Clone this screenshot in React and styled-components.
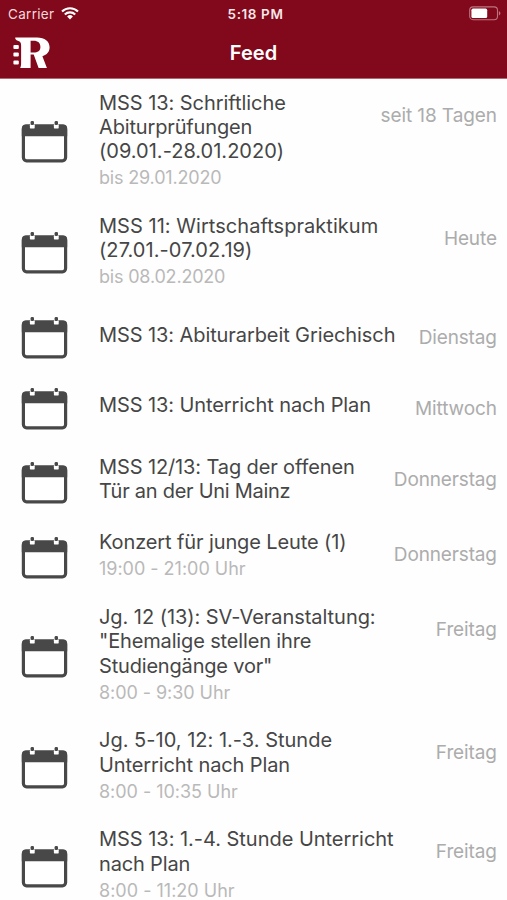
import React from "react";
import styled, { createGlobalStyle } from "styled-components";

const GlobalStyle = createGlobalStyle`
  * { box-sizing: border-box; }
  html, body { margin: 0; padding: 0; background: #fff; }
  body { font-family: Inter, "Liberation Sans", sans-serif; overflow: hidden; }
`;

const Screen = styled.div`
  width: 507px;
  height: 900px;
  overflow: hidden;
  background: #fefefe;
`;

const Header = styled.header`
  height: 79px;
  background: #82081b;
  border-bottom: 1px solid #b0676f;
  color: #fff;
`;

const StatusBar = styled.div`
  display: grid;
  grid-template-columns: 1fr auto 1fr;
  align-items: center;
  height: 27px;
  padding: 0 6px 0 8px;
`;

const Network = styled.div`
  display: flex;
  align-items: center;
  gap: 7px;
  font-size: 13.5px;
  letter-spacing: 0.3px;
  color: #f3d9dc;
`;

const Clock = styled.div`
  padding-left: 2px;
  font-size: 13.5px;
  font-weight: 600;
  letter-spacing: 0.6px;
  color: #f8e6e8;
`;

const BatteryIcon = styled.svg`
  justify-self: end;
  display: block;
`;

const NavBar = styled.div`
  display: grid;
  grid-template-columns: 1fr auto 1fr;
  align-items: center;
  height: 51px;
  padding: 0 0 0 13px;
`;

const Logo = styled.svg`
  display: block;
`;

const Title = styled.h1`
  margin: 0;
  padding-right: 13px;
  font-size: 20px;
  line-height: 24px;
  font-weight: 600;
  letter-spacing: 0.1px;
`;

const Feed = styled.main`
  display: flex;
  flex-direction: column;
  padding-top: 1.6px;
`;

const Row = styled.article`
  display: grid;
  grid-template-columns: 99px 1fr auto;
  min-height: 70.9px;
  flex: none;
  padding-right: 10px;
`;

const CalendarIcon = styled.svg`
  display: block;
  align-self: center;
  margin-left: 21px;
`;

const Body = styled.div`
  display: flex;
  flex-direction: column;
  justify-content: center;
  padding: 10px 0 ${(p) => (p.$hasSub ? 14 : 17)}px;
  white-space: nowrap;
`;

const Line = styled.div`
  font-size: 20px;
  line-height: 24.4px;
  letter-spacing: ${(p) => p.$spacing}px;
  color: #464646;
`;

const Sub = styled.div`
  margin-top: 3.6px;
  font-size: 18px;
  line-height: 22.5px;
  letter-spacing: ${(p) => p.$spacing}px;
  color: #b9b9b9;
`;

const When = styled.div`
  padding-top: 23px;
  font-size: 19px;
  line-height: 24px;
  letter-spacing: ${(p) => p.$spacing}px;
  margin-right: ${(p) => -p.$spacing}px;
  color: #acacac;
  white-space: nowrap;
`;

const entries = [
  {
    lines: [["MSS 13: Schriftliche", -0.05], ["Abiturprüfungen", -0.15], ["(09.01.-28.01.2020)", 0.01]],
    sub: ["bis 29.01.2020", -0.17],
    when: ["seit 18 Tagen", -0.09],
  },
  {
    lines: [["MSS 11: Wirtschaftspraktikum", 0.04], ["(27.01.-07.02.19)", 0.07]],
    sub: ["bis 08.02.2020", -0.19],
    when: ["Heute", -0.11],
  },
  { lines: [["MSS 13: Abiturarbeit Griechisch", -0.09]], when: ["Dienstag", -0.13] },
  { lines: [["MSS 13: Unterricht nach Plan", -0.09]], when: ["Mittwoch", -0.1] },
  {
    lines: [["MSS 12/13: Tag der offenen", -0.12], ["Tür an der Uni Mainz", -0.27]],
    when: ["Donnerstag", -0.14],
  },
  {
    lines: [["Konzert für junge Leute (1)", -0.11]],
    sub: ["19:00 - 21:00 Uhr", -0.02],
    when: ["Donnerstag", -0.14],
  },
  {
    lines: [["Jg. 12 (13): SV-Veranstaltung:", -0.05], ['"Ehemalige stellen ihre', -0.15], ['Studiengänge vor"', -0.18]],
    sub: ["8:00 - 9:30 Uhr", -0.06],
    when: ["Freitag", -0.11],
  },
  {
    lines: [["Jg. 5-10, 12: 1.-3. Stunde", 0.01], ["Unterricht nach Plan", -0.11]],
    sub: ["8:00 - 10:35 Uhr", -0.03],
    when: ["Freitag", -0.11],
  },
  {
    lines: [["MSS 13: 1.-4. Stunde Unterricht", -0.03], ["nach Plan", -0.16]],
    sub: ["8:00 - 11:20 Uhr", 0.01],
    when: ["Freitag", -0.11],
  },
];

function Wifi() {
  return (
    <svg width="18" height="13" viewBox="0 0 18 13" fill="none" stroke="#fff" strokeWidth="2.1">
      <path d="M1 4.6A11.4 11.4 0 0 1 17 4.6" />
      <path d="M3.8 7.5A7.4 7.4 0 0 1 14.2 7.5" />
      <path d="M9 12.4L6.1 9.5A4.1 4.1 0 0 1 11.9 9.5Z" fill="#fff" stroke="none" />
    </svg>
  );
}

function Battery() {
  return (
    <BatteryIcon width="32" height="15" viewBox="0 0 32 15">
      <rect x="0.7" y="0.9" width="27.8" height="12.8" rx="3.4" fill="none" stroke="#bd7480" strokeWidth="1.1" />
      <rect x="2.4" y="2.6" width="15.8" height="9.4" rx="1.6" fill="#fff" />
      <path d="M29.9 5.2C31.9 5.9 31.9 8.7 29.9 9.4Z" fill="#bd7480" />
    </BatteryIcon>
  );
}

function BrandMark() {
  return (
    <Logo width="38" height="34" viewBox="0 0 38 34" fill="#fff">
      <rect x="0.4" y="8.9" width="5.4" height="4" rx="1" />
      <rect x="0.4" y="16.6" width="5.4" height="4" rx="1" />
      <rect x="0.4" y="24.4" width="5.4" height="4" rx="1" />
      <path
        fillRule="evenodd"
        d="M2.2 1.5H24C31.8 1.5 36.6 5.4 36.6 11.3C36.6 15.8 34 18.8 29.4 20.2L33.9 31.9H25.6L20.7 18.4H17.6V31.9H7.2C7.8 30.5 8.1 29.2 8.1 27.2V9C8.1 6 6.6 5.1 4.8 4.7C3 4.3 2.2 3.2 2.2 1.5ZM17.6 4.8V16.6H20.5C24.9 16.6 27.4 14.6 27.4 10.9C27.4 7 25 4.8 20.7 4.8Z"
      />
    </Logo>
  );
}

function Calendar() {
  return (
    <CalendarIcon width="47" height="44" viewBox="0 0 47 44">
      <rect x="2.4" y="6" width="42.2" height="34.8" rx="3.2" fill="#fff" stroke="#484848" strokeWidth="3.2" />
      <path d="M0.8 16.3V8.5Q0.8 4.4 4.8 4.4H42.2Q46.2 4.4 46.2 8.5V16.3Z" fill="#484848" />
      <rect x="8.9" y="4" width="4.8" height="4.6" rx="1.2" fill="#fff" />
      <rect x="32.9" y="4" width="4.8" height="4.6" rx="1.2" fill="#fff" />
      <rect x="9.6" y="1" width="3.4" height="4" rx="1.3" fill="#484848" />
      <rect x="33.6" y="1" width="3.4" height="4" rx="1.3" fill="#484848" />
    </CalendarIcon>
  );
}

export default function App() {
  return (
    <Screen>
      <GlobalStyle />
      <Header>
        <StatusBar>
          <Network>
            Carrier
            <Wifi />
          </Network>
          <Clock>5:18 PM</Clock>
          <Battery />
        </StatusBar>
        <NavBar>
          <BrandMark />
          <Title>Feed</Title>
        </NavBar>
      </Header>
      <Feed>
        {entries.map((entry, i) => (
          <Row key={i}>
            <Calendar />
            <Body $hasSub={Boolean(entry.sub)}>
              {entry.lines.map(([text, spacing]) => (
                <Line key={text} $spacing={spacing}>{text}</Line>
              ))}
              {entry.sub && <Sub $spacing={entry.sub[1]}>{entry.sub[0]}</Sub>}
            </Body>
            <When $spacing={entry.when[1]}>{entry.when[0]}</When>
          </Row>
        ))}
      </Feed>
    </Screen>
  );
}
